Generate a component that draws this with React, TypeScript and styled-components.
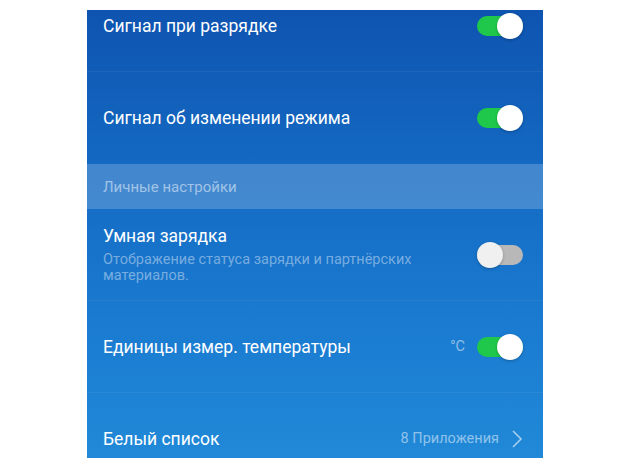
import { createGlobalStyle } from 'styled-components'
import styled from 'styled-components'

const GlobalStyle = createGlobalStyle`
  html, body {
    margin: 0;
    background: #ffffff;
    font-family: Roboto, 'Noto Sans', sans-serif;
  }
`

const Page = styled.div`
  padding: 10px 0 0 87px;
`

const Screen = styled.div`
  width: 456px;
  height: 448px;
  overflow: hidden;
  background: linear-gradient(180deg, #0e54b0 0%, #1469c2 35%, #1a7bd0 70%, #2189d8 100%);
`

const List = styled.div`
  margin-top: -30px;
  display: flex;
  flex-direction: column;
`

const Row = styled.div<{ $divider?: boolean }>`
  height: 92px;
  box-sizing: border-box;
  padding: 0 20px 0 16px;
  display: flex;
  align-items: center;
  gap: 12px;
  border-bottom: 1px solid ${({ $divider }) => ($divider ? 'rgba(255,255,255,0.06)' : 'transparent')};
`

const TextBlock = styled.div`
  flex: 1;
  display: flex;
  flex-direction: column;
  gap: 5px;
`

const Title = styled.div`
  color: #ffffff;
  font-size: 17.5px;
  line-height: 22px;
`

const Subtitle = styled.div`
  color: rgba(255, 255, 255, 0.42);
  font-size: 14.5px;
  line-height: 16px;
  padding-right: 30px;
`

const SectionHeader = styled.div`
  height: 45px;
  padding: 0 16px;
  display: flex;
  align-items: center;
  background: rgba(255, 255, 255, 0.2);
  color: rgba(255, 255, 255, 0.5);
  font-size: 15px;
`

const Value = styled.span`
  color: rgba(255, 255, 255, 0.5);
  font-size: 14.5px;
`

const Track = styled.div<{ $on: boolean }>`
  position: relative;
  width: 46px;
  height: 20px;
  border-radius: 10px;
  background: ${({ $on }) => ($on ? '#1fc84a' : '#b8b8b8')};
  flex-shrink: 0;
`

const Thumb = styled.div<{ $on: boolean }>`
  position: absolute;
  top: -3px;
  ${({ $on }) => ($on ? 'right: 0;' : 'left: 0;')}
  width: 26px;
  height: 26px;
  border-radius: 50%;
  background: ${({ $on }) => ($on ? '#ffffff' : '#f0f0f0')};
  box-shadow: 0 1px 3px rgba(0, 0, 0, 0.25);
`

const Toggle = ({ on }: { on: boolean }) => (
  <Track $on={on}>
    <Thumb $on={on} />
  </Track>
)

const Chevron = () => (
  <svg width="12" height="20" viewBox="0 0 12 20" fill="none">
    <path d="M2 2l8 8-8 8" stroke="rgba(255,255,255,0.6)" strokeWidth="1.6" />
  </svg>
)

export default function App() {
  return (
    <>
      <GlobalStyle />
      <Page>
        <Screen>
          <List>
            <Row $divider>
              <TextBlock>
                <Title>Сигнал при разрядке</Title>
              </TextBlock>
              <Toggle on />
            </Row>
            <Row>
              <TextBlock>
                <Title>Сигнал об изменении режима</Title>
              </TextBlock>
              <Toggle on />
            </Row>
            <SectionHeader>Личные настройки</SectionHeader>
            <Row $divider>
              <TextBlock>
                <Title>Умная зарядка</Title>
                <Subtitle>Отображение статуса зарядки и партнёрских материалов.</Subtitle>
              </TextBlock>
              <Toggle on={false} />
            </Row>
            <Row $divider>
              <TextBlock>
                <Title>Единицы измер. температуры</Title>
              </TextBlock>
              <Value>°C</Value>
              <Toggle on />
            </Row>
            <Row>
              <TextBlock>
                <Title>Белый список</Title>
              </TextBlock>
              <Value>8 Приложения</Value>
              <Chevron />
            </Row>
          </List>
        </Screen>
      </Page>
    </>
  )
}
